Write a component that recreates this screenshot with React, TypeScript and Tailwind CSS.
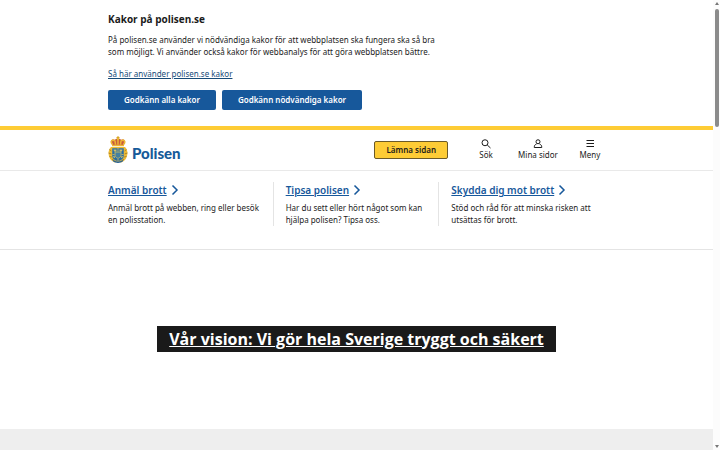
import React from 'react';

const links = [
  { title: 'Anmäl brott', text: 'Anmäl brott på webben, ring eller besök en polisstation.' },
  { title: 'Tipsa polisen', text: 'Har du sett eller hört något som kan hjälpa polisen? Tipsa oss.' },
  { title: 'Skydda dig mot brott', text: 'Stöd och råd för att minska risken att utsättas för brott.' },
];

const Crest = () => (
  <svg viewBox="0 0 40 56" className="h-7 w-5" aria-hidden="true">
    {/* laurel */}
    <path d="M6 22C-1 28 0 41 6 48l7 5 7-2 7 2 7-5c6-7 7-20 0-26z" fill="#efbb33" />
    <path d="M3 27l4 3M1 34l6 2M3 41l5 1M8 48l4-3M37 27l-4 3M39 34l-6 2M37 41l-5 1M32 48l-4-3" stroke="#94722a" strokeWidth="1.5" />
    {/* crown */}
    <path d="M9 18C2 10 8 5 14 8c1-4 11-4 12 0 6-3 12 2 5 10z" fill="#c9593c" />
    <path d="M9 17C3 10 9 6 14 10l1 7M31 17c6-7 0-11-5-7l-1 7M20 5v12M8 19h24" fill="none" stroke="#ecb534" strokeWidth="3" />
    <path d="M20 0v6M17 3h6" stroke="#d8a326" strokeWidth="2" />
    <circle cx="20" cy="6" r="2.5" fill="#e9b92f" />
    {/* shield */}
    <path d="M8 24h24v15c0 7-5 10-12 12C13 49 8 46 8 39z" fill="#2a6da3" stroke="#e8c044" strokeWidth="1" />
    <path d="M20 24v7M20 46v4M9 37h4M27 37h4" stroke="#d9bd5c" strokeWidth="1.5" />
    <path d="M11 27h6v2l-1 2h-4zM23 27h6l-1 4h-4l-1-2zM10 40h3l1 4h-2zM30 40h-3l-1 4h2z" fill="#cdbd6b" />
    <path d="M14 32h12v7c0 3-6 6-6 6s-6-3-6-6z" fill="#4480a0" stroke="#d9c25c" strokeWidth="1.5" />
    <path d="M10 49q10 7 20 0" fill="none" stroke="#245f94" strokeWidth="3" />
  </svg>
);

const SearchIcon = () => (
  <svg viewBox="0 0 20 20" className="size-2.5" fill="none" stroke="currentColor" strokeWidth="2" aria-hidden="true">
    <circle cx="8" cy="7.500" r="6" />
    <path d="M12.500 12L19 18" />
  </svg>
);

const UserIcon = () => (
  <svg viewBox="0 0 20 20" className="size-2.5" fill="none" stroke="currentColor" strokeWidth="2" aria-hidden="true">
    <circle cx="10" cy="5.500" r="4" />
    <path d="M7 10c-3 1-4.500 3-4.500 7h15c0-4-1.500-6-4.500-7" />
  </svg>
);

const MenuIcon = () => (
  <svg viewBox="0 0 20 20" className="size-2.5" fill="none" stroke="currentColor" strokeWidth="2" aria-hidden="true">
    <path d="M3 3h15M3 9h15M3 15h15" />
  </svg>
);

const NavButton: React.FC<{ icon: React.ReactNode; label: string }> = ({ icon, label }) => (
  <button className="flex w-10 flex-col items-center text-[8px] leading-[12px] whitespace-nowrap">
    {icon}
    <span>{label}</span>
  </button>
);

const CookieBanner = () => (
  <section className="border-b-4 border-[#fecc35] pt-3 pb-4">
    <div className="mx-auto max-w-[497px]">
      <h2 className="font-['Open_Sans',sans-serif] text-[10px] leading-[14px] font-bold">Kakor på polisen.se</h2>
      <p className="mt-2 max-w-[335px] text-[8px] leading-[12px]">
        På polisen.se använder vi nödvändiga kakor för att webbplatsen ska fungera ska så bra som möjligt. Vi använder också kakor för webbanalys för att göra webbplatsen bättre.
      </p>
      <a href="#kakor" className="mt-[10px] block text-[8px] leading-[12px] text-[#164b78] underline">
        Så här använder polisen.se kakor
      </a>
      <div className="mt-[10px] flex gap-1.5 text-[8px] leading-[12px] font-semibold text-white">
        <button className="rounded-xs bg-[#17589b] px-4 py-1">Godkänn alla kakor</button>
        <button className="rounded-xs bg-[#17589b] px-4 py-1">Godkänn nödvändiga kakor</button>
      </div>
    </div>
  </section>
);

const Header = () => (
  <header className="border-b border-[#e9e9e9] py-1.5">
    <div className="mx-auto flex h-7 max-w-[497px] items-center justify-between">
      <a href="#start" className="flex items-center gap-1" aria-label="Polisen startsida">
        <Crest />
        <span className="pt-1.5 font-['Lato','Open_Sans',sans-serif] text-[15px] leading-[18px] font-black text-[#165a99]">Polisen</span>
      </a>
      <div className="-mr-[5px] flex items-center">
        <button className="mr-[18px] rounded-xs border border-[#6b5a28] bg-[#fecc35] px-[11px] py-0.5 text-[8px] leading-[12px] font-semibold">
          Lämna sidan
        </button>
        <nav className="flex items-center gap-3" aria-label="Verktyg">
          <NavButton icon={<SearchIcon />} label="Sök" />
          <NavButton icon={<UserIcon />} label="Mina sidor" />
          <NavButton icon={<MenuIcon />} label="Meny" />
        </nav>
      </div>
    </div>
  </header>
);

const Shortcuts = () => (
  <section className="border-b border-[#e4e4e4] pt-[11px] pb-[23px]">
    <div className="mx-auto grid max-w-[497px] grid-cols-3 divide-x divide-[#e4e4e4]">
      {links.map((link) => (
        <div key={link.title} className="pr-3 pl-3 first:pl-0">
          <h2 className="text-[10px] leading-4 font-semibold text-[#17589b]">
            <a href="#genvag" className="flex items-center gap-1">
              <span className="underline">{link.title}</span>
              <svg viewBox="0 0 8 12" className="h-3 w-2" fill="none" stroke="currentColor" strokeWidth="1.5" aria-hidden="true">
                <path d="M1.500 1.500L6 6l-4.500 4.500" />
              </svg>
            </a>
          </h2>
          <p className="mt-1 text-[8px] leading-[12px]">{link.text}</p>
        </div>
      ))}
    </div>
  </section>
);

// Narrow scroll track along the right edge of the window
const ScrollTrack = () => (
  <div className="flex w-[7px] shrink-0 flex-col items-center justify-between bg-[#fcfcfc] pt-0.5 pb-0.5 text-[#777]" aria-hidden="true">
    <div className="flex flex-col items-center gap-1">
      <svg viewBox="0 0 4 3" className="h-[3px] w-1"><path d="M0 3L2 0l2 3z" fill="currentColor" /></svg>
      <div className="h-[118px] w-1 rounded-full bg-[#8b8b8b]" />
    </div>
    <svg viewBox="0 0 4 3" className="h-[3px] w-1"><path d="M0 0L2 3l2-3z" fill="currentColor" /></svg>
  </div>
);

export default function App() {
  return (
    <div className="flex min-h-screen bg-white font-['Noto_Sans','Open_Sans',sans-serif] text-[#1b1b1b]">
      <div className="flex min-w-0 flex-1 flex-col">
        <CookieBanner />
        <Header />
        <Shortcuts />
        <main className="flex flex-1 flex-col items-center justify-center pt-4 pb-[18px]">
          <h1 className="bg-[#1a1a1a] px-3 py-0.5 font-['Open_Sans',sans-serif] text-[16px] leading-[22px] font-bold text-white">
            <a href="#vision" className="underline">Vår vision: Vi gör hela Sverige tryggt och säkert</a>
          </h1>
        </main>
        <div className="h-[21px] bg-[#eeeeee]" />
      </div>
      <ScrollTrack />
    </div>
  );
}
